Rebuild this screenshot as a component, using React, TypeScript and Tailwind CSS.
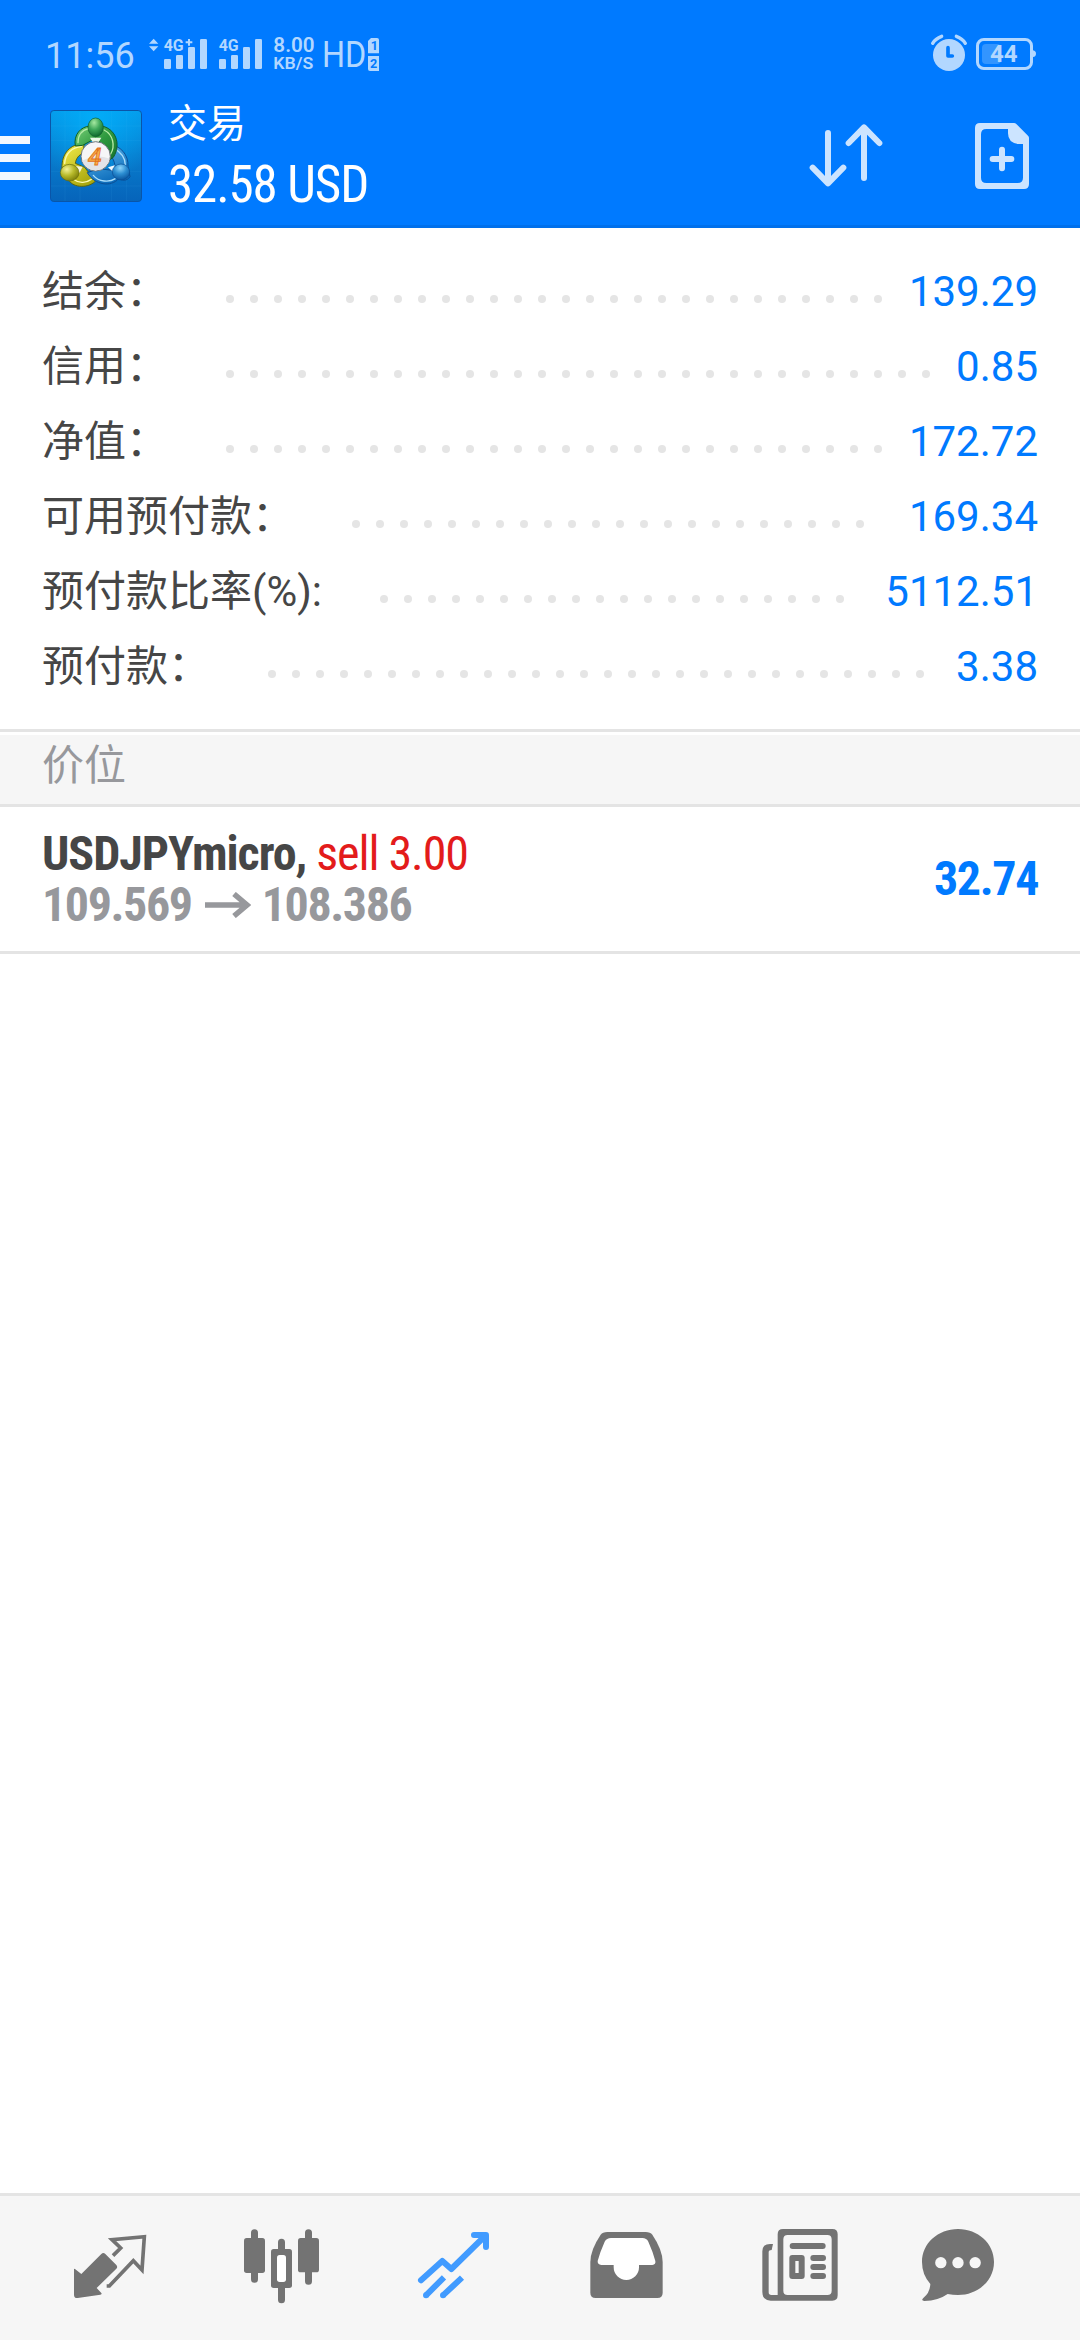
import type { ReactNode } from "react";

const summary = [
  { label: "结余：", value: "139.29", dots: 28 },
  { label: "信用：", value: "0.85", dots: 30 },
  { label: "净值：", value: "172.72", dots: 28 },
  { label: "可用预付款：", value: "169.34", dots: 22 },
  { label: "预付款比率(%):", value: "5112.51", dots: 20 },
  { label: "预付款：", value: "3.38", dots: 28 },
];

function SignalIcons() {
  return (
    <svg viewBox="435 90 720 135" className="ml-[11px] h-[45px] w-[240px]" fill="#b2d7ff">
      <path d="M461 116l14 15h-28zM461 154l14-15h-28z" />
      <text x="491" y="153" fontSize="48" fontWeight="700" textLength="60" lengthAdjust="spacingAndGlyphs">4G</text>
      <path d="M564 117h6v7h7v6h-7v7h-6v-7h-7v-6h7z" />
      <rect x="492" y="177" width="21" height="30" rx="4" />
      <rect x="528" y="165" width="21" height="42" rx="4" />
      <rect x="564" y="141" width="21" height="66" rx="4" />
      <rect x="600" y="117" width="21" height="90" rx="4" />
      <text x="656" y="153" fontSize="48" fontWeight="700" textLength="60" lengthAdjust="spacingAndGlyphs">4G</text>
      <rect x="657" y="177" width="21" height="30" rx="4" />
      <rect x="693" y="165" width="21" height="42" rx="4" />
      <rect x="729" y="141" width="21" height="66" rx="4" />
      <rect x="765" y="117" width="21" height="90" rx="4" />
      <text x="820" y="157" fontSize="60" fontWeight="600" textLength="124" lengthAdjust="spacingAndGlyphs">8.00</text>
      <text x="820" y="206" fontSize="51" fontWeight="600" textLength="120" lengthAdjust="spacingAndGlyphs">KB/S</text>
      <text x="966" y="202" fontSize="108" textLength="133" lengthAdjust="spacingAndGlyphs">HD</text>
      <path d="M1113 114h18q6 0 6 6v40h-33v-37z" />
      <path d="M1104 168h33v45h-27q-6 0-6-6z" />
      <text x="1112" y="151" fontSize="38" fontWeight="700" fill="#007aff">1</text>
      <text x="1110" y="204" fontSize="38" fontWeight="700" fill="#007aff">2</text>
    </svg>
  );
}

function AlarmAndBattery() {
  return (
    <svg viewBox="435 90 345 135" className="h-[45px] w-[115px]" fill="#b2d7ff">
      <circle cx="504" cy="165" r="48" />
      <path d="M455 130q8-14 27-21M553 130q-8-14-27-21" fill="none" stroke="#b2d7ff" strokeWidth="10" strokeLinecap="round" />
      <path d="M501 143v25h13" fill="none" stroke="#007aff" strokeWidth="11" strokeLinecap="round" strokeLinejoin="round" />
      <rect x="603" y="132" width="57" height="60" rx="12" fill="#3395ff" />
      <rect x="589.500" y="118.500" width="162" height="87" rx="19" fill="none" stroke="#b2d7ff" strokeWidth="9" />
      <path d="M756 151q9 2 9 10t-9 10z" />
      <text x="627" y="186" fontSize="70" fontWeight="700" textLength="83" lengthAdjust="spacingAndGlyphs">44</text>
    </svg>
  );
}

function AppLogo() {
  return (
    <svg viewBox="30 30 276 276" className="ml-5 size-[92px]">
      <defs>
        <linearGradient id="tile" x1="0" y1="0" x2="0" y2="1">
          <stop offset="0" stopColor="#0598e8" />
          <stop offset=".5" stopColor="#087ccd" />
          <stop offset="1" stopColor="#0664ba" />
        </linearGradient>
        <radialGradient id="glow" cx=".5" cy=".1" r=".7">
          <stop offset="0" stopColor="#00b4ff" stopOpacity=".75" />
          <stop offset="1" stopColor="#00b4ff" stopOpacity="0" />
        </radialGradient>
        <linearGradient id="green" x1="0" y1="0" x2="1" y2="1">
          <stop offset="0" stopColor="#79d07a" />
          <stop offset=".5" stopColor="#2f9a3f" />
          <stop offset="1" stopColor="#14702b" />
        </linearGradient>
        <linearGradient id="yellow" x1="0" y1="0" x2=".6" y2="1">
          <stop offset="0" stopColor="#f6ee4c" />
          <stop offset="1" stopColor="#a9a80f" />
        </linearGradient>
        <linearGradient id="blue" x1="0" y1="0" x2=".4" y2="1">
          <stop offset="0" stopColor="#63bdf0" />
          <stop offset="1" stopColor="#0c6cbb" />
        </linearGradient>
        <radialGradient id="greenHead" cx=".4" cy=".25" r=".75">
          <stop offset="0" stopColor="#a5e8a0" />
          <stop offset=".5" stopColor="#3fa85a" />
          <stop offset="1" stopColor="#0f6a2f" />
        </radialGradient>
        <radialGradient id="yellowHead" cx=".35" cy=".3" r=".75">
          <stop offset="0" stopColor="#f4f29a" />
          <stop offset=".5" stopColor="#b9bb2c" />
          <stop offset="1" stopColor="#7b7d08" />
        </radialGradient>
        <radialGradient id="blueHead" cx=".45" cy=".25" r=".75">
          <stop offset="0" stopColor="#8ed4fa" />
          <stop offset=".5" stopColor="#2c8ed2" />
          <stop offset="1" stopColor="#0a559f" />
        </radialGradient>
      </defs>
      <rect x="31.500" y="31.500" width="273" height="273" rx="10" fill="url(#tile)" />
      <rect x="31.500" y="31.500" width="273" height="273" rx="10" fill="url(#glow)" stroke="#0a55a8" strokeWidth="3" />
      <path d="M75 33v270M120 33v270M215 33v270M260 33v270M33 78h270M33 122h270M33 214h270M33 258h270" stroke="#5cc0ff" strokeOpacity=".13" strokeWidth="2" />
      {/* yellow figure */}
      <path d="M66 205C64 160 92 130 132 132L130 160C116 164 108 176 106 190L134 202L166 244C140 268 94 262 84 236Z" fill="url(#yellow)" stroke="#5a6410" strokeWidth="3" />
      <path d="M74 190C76 160 96 142 124 140M100 238C118 252 140 248 154 238" fill="none" stroke="#fbf9b0" strokeWidth="4" strokeLinecap="round" />
      <path d="M106 198l22 2-10 20z" fill="#f5f6e0" />
      {/* blue figure */}
      <path d="M204 132C242 136 266 164 264 200L270 230C260 246 244 240 236 236C214 262 164 256 142 218L176 206L226 212C226 186 218 170 204 160Z" fill="url(#blue)" stroke="#0b4f96" strokeWidth="3" />
      <path d="M222 146C246 158 256 176 256 196M160 226C176 246 208 248 226 236" fill="none" stroke="#aadefb" strokeWidth="4" strokeLinecap="round" />
      <path d="M204 202l20-6 0 24z" fill="#f0f8ff" />
      {/* green figure */}
      <path d="M106 138C100 104 122 80 150 78L184 78C224 84 246 130 220 172L200 186L196 142L168 114L128 136Z" fill="url(#green)" stroke="#0f5e2a" strokeWidth="3" />
      <path d="M114 128C114 104 128 90 146 86M192 90C220 104 226 138 212 162" fill="none" stroke="#b5eaa5" strokeWidth="4" strokeLinecap="round" />
      <path d="M150 113h34l-8 14h-18z" fill="#e9f8e6" />
      <ellipse cx="167" cy="82" rx="23" ry="28" fill="url(#greenHead)" stroke="#0f5e2a" strokeWidth="2" />
      <ellipse cx="89" cy="218" rx="28" ry="25" fill="url(#yellowHead)" stroke="#666a0c" strokeWidth="2" />
      <ellipse cx="243" cy="216" rx="26" ry="24" fill="url(#blueHead)" stroke="#0b4f96" strokeWidth="2" />
      <circle cx="167" cy="169" r="44" fill="#f6f6f8" stroke="#6f767c" strokeWidth="3" />
      <path d="M126 182Q168 160 209 176A43 43 0 0 1 126 182Z" fill="#e2e3e8" />
      <text x="144" y="196" fontSize="74" fontWeight="500" fontStyle="italic" fill="#f8b04a" stroke="#e2701c" strokeWidth="2.5">4</text>
    </svg>
  );
}

function SortIcon() {
  return (
    <svg viewBox="78 360 240 216" className="h-[72px] w-20" fill="none" stroke="#cce4ff" strokeWidth="18" strokeLinecap="round" strokeLinejoin="round">
      <path d="M144 399V548M98 503L144 550L190 503" />
      <path d="M252 534V384M206 429L252 382L298 429" />
    </svg>
  );
}

function NewOrderIcon() {
  return (
    <svg viewBox="576 360 180 216" className="ml-[86px] h-[72px] w-[60px]" fill="#cce4ff">
      <path fillRule="evenodd" d="M600 369H702Q706 369 709 372L744 407Q747 410 747 414V552Q747 567 732 567H600Q585 567 585 552V384Q585 369 600 369ZM619 387Q603 387 603 403V533Q603 549 619 549H713Q729 549 729 533V432H714Q684 428 684 400V387Z" />
      <path d="M666 449V505M638 477H694" stroke="#cce4ff" strokeWidth="18" strokeLinecap="round" />
    </svg>
  );
}

function Tab({ viewBox, children }: { viewBox: string; children: ReactNode }) {
  return (
    <button className="w-[172px]">
      <svg viewBox={viewBox} className="h-36 w-[172px]" fill="#737373">
        {children}
      </svg>
    </button>
  );
}

export default function App() {
  return (
    <div className="flex h-[2340px] w-[1080px] flex-col bg-white font-['Roboto','Noto_Sans_CJK_SC',sans-serif]" lang="zh-CN">
      <header className="flex h-[228px] flex-col border-b-[3px] border-[#0070eb] bg-[#007aff]">
        <div className="flex items-start pt-[30px] pr-[39px] pl-[45px]">
          <span className="w-[93px] text-[36px] leading-[52px] text-[#b2d7ff]">11:56</span>
          <div className="-ml-1 flex h-[51px] flex-1 items-start justify-between">
            <SignalIcons />
            <AlarmAndBattery />
          </div>
        </div>
        <div className="flex items-start pt-[14px]">
          <div className="mt-10 flex w-[30px] flex-col gap-2.5">
            <span className="h-2 bg-[#f2f8ff]" />
            <span className="h-2 bg-[#f2f8ff]" />
            <span className="h-2 bg-[#f2f8ff]" />
          </div>
          <div className="mt-3.5">
            <AppLogo />
          </div>
          <div className="mt-0.5 ml-[26px] flex flex-1 flex-col text-white">
            <span className="text-[39px] leading-[52px]">交易</span>
            <span className="mt-[3px] text-[51px] leading-[64px] tracking-[-1.1px] whitespace-nowrap [font-stretch:75%] font-['Roboto_Condensed','Roboto',sans-serif]">32.58 USD</span>
          </div>
          <div className="mt-6 mr-[48px] flex">
            <SortIcon />
            <NewOrderIcon />
          </div>
        </div>
      </header>

      <section className="pt-[26px] pb-[25px]">
        {summary.map((row) => (
          <div key={row.label} className="flex h-[75px] items-center pr-[42px] pl-[42px] text-[42px] leading-[75px]">
            <span className="whitespace-nowrap text-[#464646]">{row.label}</span>
            <span className="mt-[15px] ml-[58px] flex gap-4">
              {Array.from({ length: row.dots }, (_, i) => (
                <span key={i} className="size-2 rounded-full bg-[#e5e5e5]" />
              ))}
            </span>
            <span className="ml-auto text-[#007aff]">{row.value}</span>
          </div>
        ))}
      </section>

      <section className="border-t-[3px] border-[#e4e4e4] pt-[3px]">
        <h2 className="h-[69px] bg-[#f6f6f6] pl-[42px] text-[42px] leading-[61px] text-[#97989c]">价位</h2>
        <div className="flex h-[150px] items-center justify-between border-y-[3px] border-[#e4e4e4] px-[42px] text-[48px] font-bold tracking-[-1.05px] [font-stretch:75%] font-['Roboto_Condensed','Roboto',sans-serif]">
          <div className="flex flex-col leading-[51px]">
            <span className="whitespace-nowrap text-[#464646]">
              USDJPYmicro, <span className="font-normal text-[#e31b1b]">sell 3.00</span>
            </span>
            <span className="flex items-center tracking-[-1.4px] text-[#97989c]">
              109.569
              <svg viewBox="0 0 46 26" className="mr-[11px] ml-[13px] h-[26px] w-[46px]" fill="none" stroke="#97989c" strokeWidth="5.500">
                <path d="M0 13H42M29 2L42 13L29 24" />
              </svg>
              108.386
            </span>
          </div>
          <span className="tracking-[-1.4px] text-[#007aff]">32.74</span>
        </div>
      </section>

      <nav className="mt-auto flex h-[147px] border-t-[3px] border-[#e4e4e4] bg-[#f6f6f6] px-6">
        <Tab viewBox="-48 48 516 432">
          <path d="M102 269Q102 265 105 267L124 282L184 222Q190 216 196 222L229 255Q234 261 229 266L170 324L184 339Q187 343 181 344L113 354Q102 355 102 344Z" />
          <path d="M219 227L242 204L216 179L313 170L306 270L280 242L208 318H200" fill="none" stroke="#737373" strokeWidth="11" />
        </Tab>
        <Tab viewBox="468 48 516 432">
          <path d="M643.500 158V298M724.500 187V215M724.500 315V359M805.500 158V304" stroke="#737373" strokeWidth="21" strokeLinecap="round" />
          <rect x="612" y="174" width="63" height="105" rx="8" />
          <rect x="774" y="174" width="63" height="103" rx="8" />
          <rect x="693" y="207" width="63" height="117" rx="8" />
          <rect x="711" y="225" width="27" height="81" rx="8" fill="#fff" />
        </Tab>
        <Tab viewBox="-36 48 516 432">
          <g fill="none" stroke="#419bff" strokeWidth="18">
            <path d="M123 301L187 243L214 267L315 168M282 165H318V201" strokeLinecap="round" strokeLinejoin="round" />
            <path d="M138 346L192 292M189 346L246 293" />
            <path d="M138 346h.1M189 346h.1" strokeLinecap="round" />
          </g>
        </Tab>
        <Tab viewBox="480 48 516 432">
          <path d="M682 156H797Q811 156 817 164Q848 210 848 246V338Q848 354 832 354H647Q631 354 631 338V246Q631 210 662 164Q668 156 682 156Z" />
          <path d="M693 174H787Q800 174 805 185Q819 216 826 243Q828 254 817 255H777V262A38 38 0 0 1 701 262V255H664Q652 254 653 243Q660 216 674 185Q680 174 693 174Z" fill="#fff" />
        </Tab>
        <Tab viewBox="-24 48 516 432">
          <path fillRule="evenodd" d="M189 147H337Q353 147 353 163V346Q353 362 337 362H152Q127 362 127 336V214Q127 192 150 192H159L155 210Q146 210 146 216V337Q146 345 154 345H173V163Q173 147 189 147ZM203 165Q190 165 190 178V332Q190 345 203 345H322Q335 345 335 332V178Q335 165 322 165Z" />
          <path d="M218 198H308M280 234H309M280 261H309M280 288H309" stroke="#737373" strokeWidth="18" strokeLinecap="round" />
          <path fillRule="evenodd" d="M217 225H245Q254 225 254 234V288Q254 297 245 297H217Q208 297 208 288V234Q208 225 217 225ZM226 243V279H236V243Z" />
        </Tab>
        <Tab viewBox="492 48 516 432">
          <path d="M714 147C774 147 822 190 822 246C822 302 774 345 714 345Q698 345 683 342Q655 362 613 363Q602 361 610 354Q630 338 631 312Q606 284 606 246C606 190 654 147 714 147Z" />
          <g fill="#f6f6f6">
            <circle cx="662.500" cy="248" r="17" />
            <circle cx="714" cy="248" r="17" />
            <circle cx="765.500" cy="248" r="17" />
          </g>
        </Tab>
      </nav>
    </div>
  );
}
